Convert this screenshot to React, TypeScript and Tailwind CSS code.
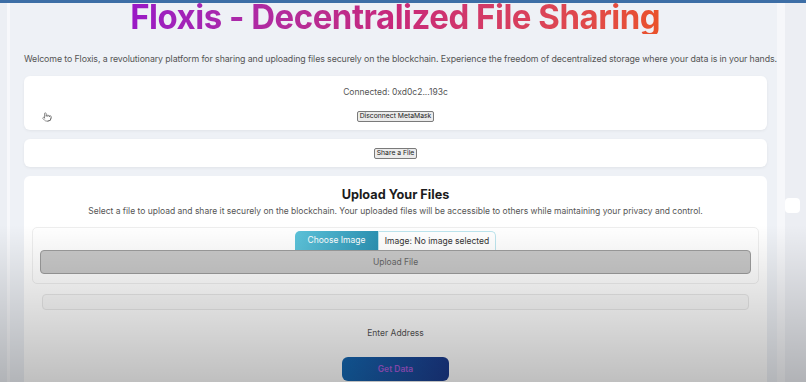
import { Pointer } from "lucide-react";

const NativeButton = ({ label }: { label: string }) => (
  <button className="h-[11px] px-[2px] bg-[#ebebeb] border border-[#7a7a7a] rounded-[2px] text-[6.8px] leading-none text-[#222]">
    {label}
  </button>
);

const App = () => {
  return (
    <div
      className="relative w-[806px] h-[382px] overflow-hidden bg-[#eef1f6] text-[#555]"
      style={{ fontFamily: "Inter, 'Noto Sans', sans-serif" }}
    >
      <div className="h-[3px] bg-[#3d6ea6]" />
      <div className="flex h-[379px]">
        <div className="w-[7px] bg-[#eceff4]" />
        <div className="w-[3px] bg-[#f7f8fb]" />

        <main className="flex-1 min-w-0 flex flex-col pl-[14px] pr-[10px]">
          <h1 className="-mt-[3px] text-center text-[34px] leading-[34px] font-bold tracking-[-0.5px] whitespace-nowrap">
            <span className="inline-block scale-x-[0.97] bg-linear-to-r from-[#9918c6] via-[#c8287a] to-[#ea5229] bg-clip-text text-transparent">
              Floxis - Decentralized File Sharing
            </span>
          </h1>
          <p className="mt-[19px] text-center text-[8.8px] leading-[12px] text-[#555] whitespace-nowrap tracking-[-0.1px]">
            Welcome to Floxis, a revolutionary platform for sharing and uploading files securely on the blockchain. Experience the freedom of decentralized storage where your data is in your hands.
          </p>

          <section className="relative mt-[11px] h-[54px] bg-white rounded-[6px] shadow-[0_1px_3px_rgba(0,0,0,0.06)] flex flex-col items-center">
            <div className="mt-[10px] text-[8.5px] leading-[12px] text-[#555]">Connected: 0xd0c2...193c</div>
            <div className="mt-[2px]">
              <NativeButton label="Disconnect MetaMask" />
            </div>
            <Pointer className="absolute left-[18px] top-[36px] text-[#555]" size={10} strokeWidth={1.5} />
          </section>

          <section className="mt-[9px] h-[28px] bg-white rounded-[6px] shadow-[0_1px_3px_rgba(0,0,0,0.06)] flex items-center justify-center">
            <NativeButton label="Share a File" />
          </section>

          <section className="mt-[9px] flex-1 bg-white rounded-t-[6px] flex flex-col items-center">
            <h2 className="mt-[10px] text-[12.7px] leading-[18px] font-bold text-[#1c1c1c]">Upload Your Files</h2>
            <p className="mt-[1px] text-[8.5px] leading-[12px] text-[#555] whitespace-nowrap">
              Select a file to upload and share it securely on the blockchain. Your uploaded files will be accessible to others while maintaining your privacy and control.
            </p>

            <div className="mt-[10px] self-stretch mx-[8px] h-[57px] border border-[#eeeeee] rounded-[5px] flex flex-col items-center">
              <div className="flex h-[19px] mt-[3px]">
                <div className="w-[83px] bg-linear-to-r from-[#5cc3da] to-[#2b92b3] rounded-tl-[5px] text-white text-[8.5px] flex items-center justify-center">
                  Choose Image
                </div>
                <div className="w-[118px] bg-white border border-b-0 border-[#bde5ee] rounded-tr-[5px] text-[#333] text-[8.5px] flex items-center justify-center">
                  Image: No image selected
                </div>
              </div>
              <button className="self-stretch mx-[7px] h-[24px] bg-[#c9c9c9] border border-[#9c9c9c] rounded-[4px] text-[8.5px] text-[#666]">
                Upload File
              </button>
            </div>

            <div className="mt-[10px] self-stretch mx-[18px] h-[16px] border border-[#e8e8e8] rounded-[4px] bg-[#fafafa]" />

            <div className="mt-[17px] text-[8.5px] leading-[12px] text-[#555]">Enter Address</div>

            <button className="mt-[18px] w-[107px] h-[24px] rounded-[6px] bg-linear-to-r from-[#1468b2] to-[#1b3a8c] text-[8.5px] font-semibold text-[#a75ad8]">
              Get Data
            </button>
          </section>
        </main>

        <div className="w-[8px] bg-[#f6f7fa]" />
        <div className="w-[21px] bg-[#eceef3] pt-[195px]">
          <div className="w-[15px] h-[15px] bg-white rounded-[4px]" />
        </div>
      </div>

      <div className="pointer-events-none absolute left-0 right-0 top-[225px] bottom-0 bg-linear-to-b from-transparent to-black/25" />
    </div>
  );
};

export default App;
